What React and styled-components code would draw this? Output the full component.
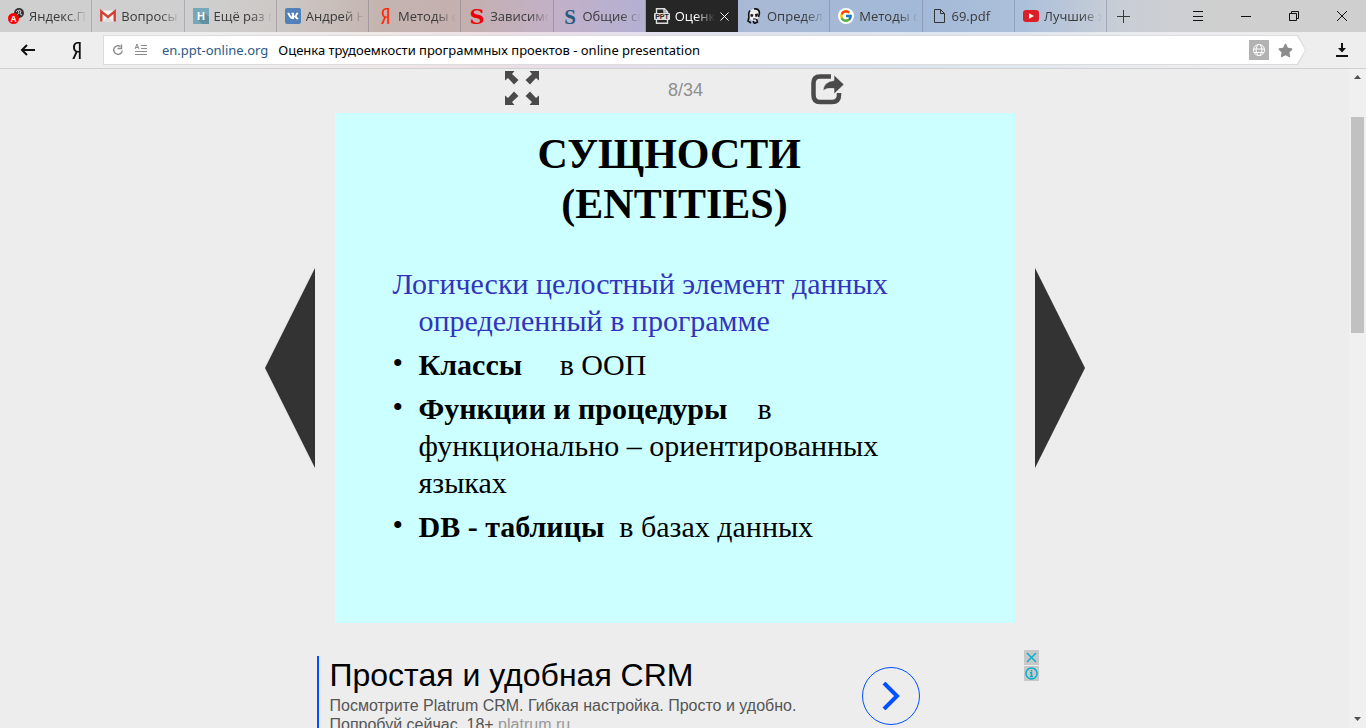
import styled, { createGlobalStyle } from "styled-components";
import { FaVk, FaYandex, FaStar } from "react-icons/fa";
import { FcGoogle } from "react-icons/fc";

const GlobalStyle = createGlobalStyle`
    *{ box-sizing:border-box; }
    body{ margin:0; background-color:#ededed; }
    button{ border:none; background:none; padding:0; margin:0; font:inherit; color:inherit; }
    svg{ display:block; flex:none; }
`
const uiFont = `"Noto Sans", "Open Sans", sans-serif`;
const arialFont = `"Liberation Sans", Arial, sans-serif`;

const Browser = styled.div`
    height:100vh;
    display:flex;
    flex-direction:column;
    overflow:hidden;
    font-family:${uiFont};
`
const TabStrip = styled.header`
    flex:none;
    height:32px;
    display:flex;
    justify-content:space-between;
    color:#3a3a3a;
    background:linear-gradient(90deg, #cfcfcf 0%, #cfcfcf 15%, #ccc7c4 21%, #c4b4b0 28%, #c4b0af 34%, #c2b0c9 41%, #b4b0d3 47%, #a9b9d5 54%, #a2b9d7 67%, #adc0db 75%, #c9ced6 82%, #cfcfcf 89%, #cfcfcf 100%);
`
const Tabs = styled.nav`
    flex:0 1 1107px;
    min-width:0;
    display:flex;
`
const TabBox = styled.div`
    flex:1 1 0;
    min-width:0;
    display:flex;
    align-items:center;
    padding-right:4px;
    border-right:1px solid ${({ $active }) => ($active ? "#262626" : "rgba(90,90,110,0.3)")};
    background-color:${({ $active }) => ($active ? "#262626" : "transparent")};
    color:${({ $active }) => ($active ? "#fff" : "inherit")};
`
const TabButton = styled.button`
    flex:1;
    min-width:0;
    height:32px;
    display:flex;
    align-items:center;
    gap:5px;
    padding-left:8px;
    font-family:"Open Sans", "Noto Sans", sans-serif;
    font-size:13px;
`
const TabTitle = styled.span`
    flex:1;
    overflow:hidden;
    white-space:nowrap;
    text-align:left;
    mask-image:linear-gradient(90deg, #000 calc(100% - 20px), transparent);
`
const TabClose = styled.button`
    width:18px; height:32px;
    display:grid;
    place-items:center;
`
const NewTab = styled.button`
    width:32px; height:32px;
    display:grid;
    place-items:center;
`
const WindowButtons = styled.div`
    flex:none;
    margin-left:auto;
    display:flex;
`
const BarButton = styled.button`
    flex:none;
    width:48px; height:32px;
    display:grid;
    place-items:center;
    color:#111;
`
const Toolbar = styled.div`
    flex:none;
    height:37px;
    display:flex;
    align-items:center;
    padding-left:4px;
    border-bottom:1px solid #d0d0d2;
    background:linear-gradient(90deg, #eee 0%, #eee 15%, #eee8e7 28%, #ecdfe3 36%, #e7deeb 43%, #dfe2ee 54%, #dce5ef 67%, #e0e7ef 75%, #ebecee 84%, #eee 100%);
`
const AddressEdge = styled.div`
    flex:1;
    min-width:0;
    height:30px;
    margin:0 12px 0 3px;
    padding:1px;
    background-color:#dcdcde;
    clip-path:polygon(0 0, calc(100% - 8px) 0, 100% 50%, calc(100% - 8px) 100%, 0 100%);
`
const Address = styled.form`
    height:28px;
    display:flex;
    align-items:center;
    padding:0 4px 0 7px;
    background-color:#fff;
    font-size:13px;
    clip-path:polygon(0 0, calc(100% - 8px) 0, 100% 50%, calc(100% - 8px) 100%, 0 100%);
`
const SmallButton = styled.button`
    width:${({ $wide }) => ($wide ? "32px" : "14px")}; height:20px;
    display:grid;
    place-items:center;
    color:#8c8c8c;
`
const Domain = styled.a`
    margin:0 10px 0 5px;
    color:#2b5a88;
    text-decoration:none;
`
const PageTitle = styled.input`
    flex:1;
    min-width:0;
    padding:0;
    border:none;
    outline:none;
    background:transparent;
    color:#000;
    font:13px ${uiFont};
`
const TranslateButton = styled.button`
    width:20px; height:20px;
    display:grid;
    place-items:center;
    background-color:#b2b2b2;
    color:#fff;
`
const Viewport = styled.div`
    flex:1;
    min-height:0;
    display:flex;
    background-color:#ededed;
`
const Page = styled.main`
    flex:1;
    min-width:0;
    overflow:hidden;
    display:flex;
    flex-direction:column;
    align-items:center;
`
const ScrollBar = styled.div`
    flex:none;
    width:17px;
    display:flex;
    flex-direction:column;
    align-items:center;
    background-color:#f0f0f0;
    padding:6px 2px 7px;
`
const ScrollThumb = styled.div`
    width:13px; height:216px;
    margin:38px 0 auto;
    background-color:#c1c1c1;
`
const SlideTools = styled.div`
    flex:none;
    height:44px;
    display:grid;
    grid-template-columns:repeat(3, 153px);
    justify-items:center;
    align-items:start;
    padding-top:2px;
    color:#4a4a4a;
`
const Counter = styled.span`
    padding-left:22px;
    color:#8f8f8f;
    font:18px/38px ${arialFont};
`
const SlideRow = styled.section`
    flex:none;
    display:flex;
    align-items:center;
    gap:20px;
`
const Slide = styled.article`
    width:680px;
    aspect-ratio:4 / 3;
    background-color:#ccffff;
    color:#000;
    font-family:"Liberation Serif", "Times New Roman", serif;
`
const SlideTitle = styled.h1`
    margin:0;
    padding-top:16px;
    text-align:center;
    white-space:pre;
    font-size:42px;
    line-height:50px;
`
const SlideBody = styled.div`
    padding:36px 110px 0 58px;
    font-size:30px;
    line-height:37px;
`
const Lead = styled.p`
    margin:0 0 7px;
    padding-left:26px;
    text-indent:-26px;
    color:#3333bb;
`
const Points = styled.ul`
    margin:0;
    padding:0;
    list-style:none;
`
const Point = styled.li`
    display:flex;
    margin-bottom:7px;
    white-space:pre-wrap;
    &::before{ content:"•"; flex:none; width:26px; line-height:34px; }
`
const Ad = styled.aside`
    flex:none;
    width:722px;
    margin:27px 0 0 6px;
    display:flex;
    align-items:flex-start;
    font-family:${arialFont};
`
const AdText = styled.div`
    width:545px;
    margin-top:6px;
    padding-left:11px;
    border-left:2px solid #0050ff;
    color:#555;
    font-size:16px;
    line-height:19px;
`
const AdTitle = styled.h2`
    margin:0;
    color:#000;
    font-weight:400;
    font-size:32px;
    line-height:38px;
`
const AdLine = styled.p`
    margin:2px 0 12px;
    width:480px;
`
const AdLink = styled.a`
    color:#999;
    text-decoration:none;
`
const AdGo = styled.button`
    width:58px; height:58px;
    margin-top:17px;
    border:1px solid #0050ff;
    border-radius:50%;
    display:grid;
    place-items:center;
    &&{ color:#0050ff; }
`
const AdMarks = styled.div`
    margin-left:auto;
    display:grid;
    gap:1px;
`
const AdMark = styled.button`
    width:15px; height:15px;
    display:grid;
    place-items:center;
    background-color:#c8c8c8;
    &&{ color:#00aecd; }
`

function Metrika(){
    return(
        <svg width="16" height="16" viewBox="0 0 16 16">
            <circle cx="11" cy="5" r="5" fill="#333"/>
            <path d="M8 4l2-2 1 3-2 2M11 2l2 1-1 3 2 1" stroke="#ccc" fill="none"/>
            <circle cx="5.5" cy="10.5" r="5.5" fill="#f00"/>
            <text x="5.5" y="13.6" textAnchor="middle" fontFamily="Liberation Sans" fontWeight="700" fontSize="8.5" fill="#fff">A</text>
        </svg>
    )
}
function Gmail(){
    return(
        <svg width="16" height="16" viewBox="0 0 16 16">
            <path d="M1 2.500h14v11H1z" fill="#f3f3f3"/>
            <path d="M3 13.500l5-5 5 5z" fill="#dcdcdc"/>
            <path d="M1.300 13.500V3.500L8 9l6.700-5.500v10" fill="none" stroke="#d54137" strokeWidth="2.400"/>
        </svg>
    )
}
function LetterH(){
    return(
        <svg width="16" height="16" viewBox="0 0 16 16">
            <path d="M0 0h16v16H0z" fill="#77a8b9"/>
            <path d="M11 4l5 5v7H9l-4-4z" fill="#628fa0"/>
            <text x="8" y="12" textAnchor="middle" fontFamily="Liberation Sans" fontWeight="700" fontSize="11" fill="#fff">H</text>
        </svg>
    )
}
function Vk(){
    return(
        <svg width="16" height="16" viewBox="0 0 16 16">
            <rect width="16" height="16" rx="2" fill="#5181b8"/>
            <FaVk x="2" y="2" size={12} color="#fff"/>
        </svg>
    )
}
function LetterS({ color, font }){
    return(
        <svg width="16" height="16" viewBox="0 0 16 16">
            <text x="8" y="15.500" textAnchor="middle" fontFamily={font} fontWeight="700" fontSize="21" fill={color}>S</text>
        </svg>
    )
}
function PptFile(){
    return(
        <svg width="16" height="16" viewBox="0 0 16 16">
            <path d="M2.500 5V.8h8l3 3V5M10 1v3h3M2.500 12v3.200h11V12" fill="none" stroke="#ddd" strokeWidth="1.400"/>
            <rect y="5" width="16" height="7" rx="1" fill="#ddd"/>
            <text x="8" y="11" textAnchor="middle" fontFamily="Liberation Sans" fontWeight="700" fontSize="7" fill="#262626">PPT</text>
        </svg>
    )
}
function Panda(){
    return(
        <svg width="16" height="16" viewBox="0 0 16 16">
            <ellipse cx="8" cy="7" rx="5" ry="6" fill="#eee"/>
            <path d="M4 2.500Q2 5 3 9M8 1q5-1 5.500 4l-1 4M3 9l-1 4 3 2M7 13l1.500 2.500 3-1.500-1-3" stroke="#111" strokeWidth="1.600" fill="none"/>
            <path d="M4.500 6l3 .5-1 2.500-2-.5zM9 6l3-.5-.5 3-2 .5z" fill="#111"/>
            <path d="M7 11h3" stroke="#111"/>
        </svg>
    )
}
function Google(){
    return(
        <svg width="16" height="16" viewBox="0 0 16 16">
            <circle cx="8" cy="8" r="8" fill="#fff"/>
            <FcGoogle x="1" y="1" size={14}/>
        </svg>
    )
}
function Paper(){
    return(
        <svg width="16" height="16" viewBox="0 0 16 16">
            <path d="M3.500 1.500h6l4 4v9h-10zM9.500 1.500v4h4" fill="none" stroke="#333"/>
        </svg>
    )
}
function Youtube(){
    return(
        <svg width="16" height="16" viewBox="0 0 16 16">
            <rect y="2" width="16" height="12" rx="3" fill="#dc1f26"/>
            <path d="M6 5.200l5 2.800-5 2.800z" fill="#fff"/>
        </svg>
    )
}
function ExpandIcon(){
    const arrow = "M0 0H9.500L7 3 13.500 9 9 13.500 3 7 0 9.500Z";
    return(
        <svg width="34" height="34" viewBox="0 0 34 34" fill="currentColor">
            <path d={arrow}/>
            <path d={arrow} transform="translate(34 0) scale(-1 1)"/>
            <path d={arrow} transform="translate(0 34) scale(1 -1)"/>
            <path d={arrow} transform="translate(34 34) scale(-1 -1)"/>
        </svg>
    )
}
function ShareIcon(){
    return(
        <svg width="33" height="34" viewBox="0 0 33 34">
            <path d="M20 5.500H9Q2.500 5.500 2.500 12V24Q2.500 31 9 31H21Q28 31 28 24V22" fill="none" stroke="currentColor" strokeWidth="4.500"/>
            <path d="M23 4l10 9.500-10 9.500v-5.500q-7-1-11 2 1-9 11-10z" fill="currentColor" stroke="#ededed" strokeWidth=".6"/>
        </svg>
    )
}
function Stroke({ d, width = 1, w = 16, h = 16 }){
    return(
        <svg width={w} height={h} viewBox={`0 0 ${w} ${h}`}>
            <path d={d} fill="none" stroke="currentColor" strokeWidth={width}/>
        </svg>
    )
}

const tabs = [
    { title:"Яндекс.Пе", icon:<Metrika/> },
    { title:"Вопросы", icon:<Gmail/> },
    { title:"Ещё раз п", icon:<LetterH/> },
    { title:"Андрей Н", icon:<Vk/> },
    { title:"Методы с", icon:<FaYandex size={16} color="#ff2a0c"/> },
    { title:"Зависимо", icon:<LetterS color="#f00000" font="DejaVu Serif"/> },
    { title:"Общие св", icon:<LetterS color="#245a7c" font="Liberation Serif"/> },
    { title:"Оценка", icon:<PptFile/>, active:true },
    { title:"Определе", icon:<Panda/> },
    { title:"Методы с", icon:<Google/> },
    { title:"69.pdf", icon:<Paper/> },
    { title:"Лучшие х", icon:<Youtube/> },
];

function App(){
    return(
        <Browser>
            <GlobalStyle/>
            <TabStrip>
                <Tabs>
                    {tabs.map((tab, i)=>(
                        <TabBox key={i} $active={tab.active}>
                            <TabButton>{tab.icon}<TabTitle>{tab.title}</TabTitle></TabButton>
                            {tab.active && <TabClose aria-label="Закрыть"><Stroke w={9} h={9} d="M.5.5l8 8M8.500.5l-8 8"/></TabClose>}
                        </TabBox>
                    ))}
                </Tabs>
                <NewTab aria-label="Новая вкладка"><Stroke w={13} h={13} d="M6.500 0v13M0 6.500h13"/></NewTab>
                <WindowButtons>
                    <BarButton aria-label="Меню"><Stroke w={10} h={10} d="M0 .5h10M0 5.500h10M0 9.500h10"/></BarButton>
                    <BarButton aria-label="Свернуть"><Stroke w={10} h={10} d="M0 5.500h10"/></BarButton>
                    <BarButton aria-label="Восстановить"><Stroke w={10} h={10} d="M.5 2.500h7v7h-7zM2.500 2.500v-2h7v7h-2"/></BarButton>
                    <BarButton aria-label="Закрыть окно"><Stroke w={10} h={10} d="M0 0l10 10M10 0L0 10"/></BarButton>
                </WindowButtons>
            </TabStrip>
            <Toolbar>
                <BarButton aria-label="Назад"><Stroke width={2} d="M15 8H2M7 3L2 8l5 5"/></BarButton>
                <BarButton aria-label="Яндекс"><FaYandex size={17}/></BarButton>
                <AddressEdge>
                    <Address>
                        <SmallButton type="button" aria-label="Обновить"><Stroke w={12} h={12} width={1.4} d="M8.500 2.500A4.300 4.300 0 1 0 10.300 6.500M5.500 4.500H9.500V.5"/></SmallButton>
                        <SmallButton type="button" $wide aria-label="Режим чтения">
                            <svg width="14" height="14" viewBox="0 0 14 14" stroke="currentColor" fill="none">
                                <path d="M1 6l2-5 2 5M2 4.500h2M7 2.500h6M7 5.500h6M1 8.500h12M1 11.500h12"/>
                            </svg>
                        </SmallButton>
                        <Domain href="#">en.ppt-online.org</Domain>
                        <PageTitle aria-label="Адрес" readOnly value="Оценка трудоемкости программных проектов - online presentation"/>
                        <TranslateButton type="button" aria-label="Перевести">
                            <Stroke w={14} h={14} d="M7 1.500a5.500 5.500 0 1 0 .01 0M1.500 6h11M2 9.500h10M6 1.500q-4 5 0 11M8 1.500q4 5 0 11"/>
                        </TranslateButton>
                        <SmallButton type="button" $wide aria-label="В закладки"><FaStar size={15}/></SmallButton>
                    </Address>
                </AddressEdge>
                <BarButton aria-label="Загрузки">
                    <svg width="12" height="14" viewBox="0 0 12 14" fill="currentColor">
                        <path d="M5 0h2v5h3L6 9.500 2 5h3zM0 12h12v2H0z"/>
                    </svg>
                </BarButton>
            </Toolbar>
            <Viewport>
                <Page>
                    <SlideTools>
                        <button aria-label="На весь экран"><ExpandIcon/></button>
                        <Counter>8/34</Counter>
                        <button aria-label="Поделиться"><ShareIcon/></button>
                    </SlideTools>
                    <SlideRow>
                        <button aria-label="Предыдущий слайд">
                            <svg width="50" height="200" viewBox="0 0 50 200"><path d="M50 0v200L0 100z" fill="#333"/></svg>
                        </button>
                        <Slide>
                            <SlideTitle>{"СУЩНОСТИ \n(ENTITIES)"}</SlideTitle>
                            <SlideBody>
                                <Lead>Логически целостный элемент данных определенный в программе</Lead>
                                <Points>
                                    <Point><span><b>Классы</b>{"     в ООП"}</span></Point>
                                    <Point><span><b>Функции и процедуры</b>{"    в функционально – ориентированных языках"}</span></Point>
                                    <Point><span><b>DB - таблицы</b>{"  в базах данных"}</span></Point>
                                </Points>
                            </SlideBody>
                        </Slide>
                        <button aria-label="Следующий слайд">
                            <svg width="50" height="200" viewBox="0 0 50 200"><path d="M0 0v200l50-100z" fill="#333"/></svg>
                        </button>
                    </SlideRow>
                    <Ad>
                        <AdText>
                            <AdTitle>Простая и удобная CRM</AdTitle>
                            <AdLine>Посмотрите Platrum CRM. Гибкая настройка. Просто и удобно. Попробуй сейчас. 18+ <AdLink href="#">platrum.ru</AdLink></AdLine>
                        </AdText>
                        <AdGo aria-label="Перейти"><Stroke w={18} h={28} width={4} d="M2 1l13 13L2 27"/></AdGo>
                        <AdMarks>
                            <AdMark aria-label="Скрыть"><Stroke w={11} h={11} width={1.4} d="M1 1l9 9M10 1l-9 9"/></AdMark>
                            <AdMark aria-label="О рекламе"><Stroke w={13} h={13} width={1.4} d="M6.500 1a5.500 5.500 0 1 0 .01 0M6.500 3v1.500M5 5.800h1.500v3.700M5 9.500h3"/></AdMark>
                        </AdMarks>
                    </Ad>
                </Page>
                <ScrollBar>
                    <svg width="7" height="4" viewBox="0 0 7 4"><path d="M0 4l3.500-4L7 4z" fill="#505050"/></svg>
                    <ScrollThumb/>
                    <svg width="7" height="4" viewBox="0 0 7 4"><path d="M0 0l3.500 4L7 0z" fill="#505050"/></svg>
                </ScrollBar>
            </Viewport>
        </Browser>
    )
}
export default App;
